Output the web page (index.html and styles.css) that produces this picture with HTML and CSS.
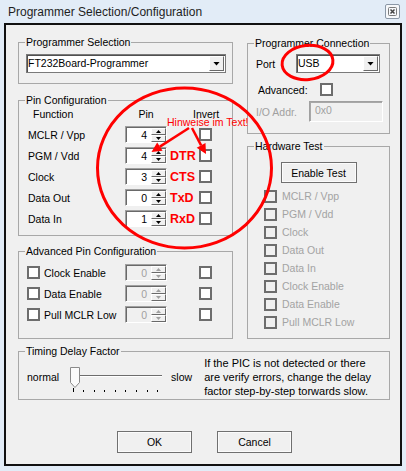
FILE: index.html
```html
<!DOCTYPE html>
<html lang="de">
<head>
    <meta charset="UTF-8">
    <meta name="viewport" content="width=device-width, initial-scale=1.0">
    <title>Programmer Selection/Configuration</title>
    <link rel="stylesheet" href="styles.css">
</head>
<body>
    <div class="window">
        <div class="titlebar">
            <span class="title">Programmer Selection/Configuration</span>
            <span class="close">
                <svg width="9" height="9" viewBox="0 0 9 9"><rect x="0.5" y="0.5" width="8" height="8" rx="1" fill="none" stroke="#7a7a7a"/><path d="M2.5 2.5 L6.5 6.5 M6.5 2.5 L2.5 6.5" stroke="#444" stroke-width="1.5"/></svg>
            </span>
        </div>
        <div class="client">
            <div class="columns">
                <div class="col left">
                    <fieldset class="group sel">
                        <legend>Programmer Selection</legend>
                        <div class="combo wide"><span class="combo-text">FT232Board-Programmer</span><span class="combo-btn"></span></div>
                    </fieldset>

                    <fieldset class="group pins">
                        <legend>Pin Configuration</legend>
                        <div class="pin-head"><span class="h-func">Function</span><span class="h-pin">Pin</span><span class="h-inv">Invert</span></div>
                        <div class="pin-grid">
                            <span>MCLR / Vpp</span>
                            <div class="spin"><span class="val">4</span><span class="arrows"><i class="up"></i><i class="dn"></i></span></div>
                            <b class="line"></b>
                            <span class="chk"></span>

                            <span>PGM / Vdd</span>
                            <div class="spin"><span class="val">4</span><span class="arrows"><i class="up"></i><i class="dn"></i></span></div>
                            <b class="line">DTR</b>
                            <span class="chk"></span>

                            <span>Clock</span>
                            <div class="spin"><span class="val">3</span><span class="arrows"><i class="up"></i><i class="dn"></i></span></div>
                            <b class="line">CTS</b>
                            <span class="chk"></span>

                            <span>Data Out</span>
                            <div class="spin"><span class="val">0</span><span class="arrows"><i class="up"></i><i class="dn"></i></span></div>
                            <b class="line">TxD</b>
                            <span class="chk"></span>

                            <span>Data In</span>
                            <div class="spin"><span class="val">1</span><span class="arrows"><i class="up"></i><i class="dn"></i></span></div>
                            <b class="line">RxD</b>
                            <span class="chk"></span>
                        </div>
                    </fieldset>

                    <fieldset class="group adv">
                        <legend>Advanced Pin Configuration</legend>
                        <div class="adv-grid">
                            <label class="opt"><span class="chk"></span><span>Clock Enable</span></label>
                            <div class="spin off"><span class="val">0</span><span class="arrows"><i class="up"></i><i class="dn"></i></span></div>
                            <span></span>
                            <span class="chk"></span>

                            <label class="opt"><span class="chk"></span><span>Data Enable</span></label>
                            <div class="spin off"><span class="val">0</span><span class="arrows"><i class="up"></i><i class="dn"></i></span></div>
                            <span></span>
                            <span class="chk"></span>

                            <label class="opt"><span class="chk"></span><span>Pull MCLR Low</span></label>
                            <div class="spin off"><span class="val">0</span><span class="arrows"><i class="up"></i><i class="dn"></i></span></div>
                            <span></span>
                            <span class="chk"></span>
                        </div>
                    </fieldset>
                </div>

                <div class="col right">
                    <fieldset class="group conn">
                        <legend>Programmer Connection</legend>
                        <div class="row port">
                            <span class="lbl">Port</span>
                            <div class="combo short"><span class="combo-text">USB</span><span class="combo-btn"></span></div>
                        </div>
                        <div class="row advanced">
                            <span class="lbl">Advanced:</span>
                            <span class="chk"></span>
                        </div>
                        <div class="row io">
                            <span class="lbl grey">I/O Addr.</span>
                            <span class="addr">0x0</span>
                        </div>
                    </fieldset>

                    <fieldset class="group hw">
                        <legend>Hardware Test</legend>
                        <div class="hw-btn"><button class="btn test">Enable Test</button></div>
                        <div class="hw-list">
                            <label class="hw-item"><span class="chk off"></span><span>MCLR / Vpp</span></label>
                            <label class="hw-item"><span class="chk off"></span><span>PGM / Vdd</span></label>
                            <label class="hw-item"><span class="chk off"></span><span>Clock</span></label>
                            <label class="hw-item"><span class="chk off"></span><span>Data Out</span></label>
                            <label class="hw-item"><span class="chk off"></span><span>Data In</span></label>
                            <label class="hw-item"><span class="chk off"></span><span>Clock Enable</span></label>
                            <label class="hw-item"><span class="chk off"></span><span>Data Enable</span></label>
                            <label class="hw-item"><span class="chk off"></span><span>Pull MCLR Low</span></label>
                        </div>
                    </fieldset>
                </div>
            </div>

            <fieldset class="group timing">
                <legend>Timing Delay Factor</legend>
                <div class="timing-row">
                    <span class="t-normal">normal</span>
                    <svg class="slider" width="100" height="30" viewBox="0 0 100 30">
                        <rect x="6" y="13" width="90" height="1" fill="#6d6d6d"/>
                        <rect x="6" y="14" width="90" height="1" fill="#ffffff"/>
                        <rect x="7" y="26" width="1" height="4" fill="#000"/>
                        <rect x="17" y="28" width="1" height="2" fill="#000"/>
                        <rect x="28" y="28" width="1" height="2" fill="#000"/>
                        <rect x="38" y="28" width="1" height="2" fill="#000"/>
                        <rect x="49" y="28" width="1" height="2" fill="#000"/>
                        <rect x="59" y="28" width="1" height="2" fill="#000"/>
                        <rect x="70" y="28" width="1" height="2" fill="#000"/>
                        <rect x="81" y="28" width="1" height="2" fill="#000"/>
                        <rect x="91" y="28" width="1" height="2" fill="#000"/>
                        <path d="M4.5 5.5 H13.5 V20.5 L9 25.5 L4.5 20.5 Z" fill="#fbfbfb" stroke="#8a8a8a"/>
                    </svg>
                    <span class="t-slow">slow</span>
                    <p class="t-help">If the PIC is not detected or there<br>are verify errors, change the delay<br>factor step-by-step torwards slow.</p>
                </div>
            </fieldset>

            <div class="buttons">
                <button class="btn">OK</button>
                <button class="btn">Cancel</button>
            </div>
        </div>

        <!-- red hand-drawn notes on top of the dialog -->
        <svg class="marks" width="406" height="471" viewBox="0 0 406 471">
            <ellipse cx="184.5" cy="168" rx="87" ry="80" fill="none" stroke="#f00" stroke-width="3"/>
            <ellipse cx="307.5" cy="62.5" rx="25.5" ry="17" transform="rotate(-6 307.5 62.5)" fill="none" stroke="#f00" stroke-width="3"/>
            <line x1="189" y1="128" x2="159.9" y2="146.6" stroke="#f00" stroke-width="2.5"/>
            <polygon points="151.5,152 162.6,150.8 157.2,142.4" fill="#f00"/>
            <line x1="192" y1="128" x2="201.1" y2="145.3" stroke="#f00" stroke-width="2.5"/>
            <polygon points="206,154 205.5,142.9 196.7,147.7" fill="#f00"/>
        </svg>
        <span class="hint">Hinweise im Text!</span>
    </div>
</body>
</html>
```

FILE: styles.css
```css
* {
    box-sizing: border-box;
}
body {
    margin: 0;
    font-family: "Liberation Sans", Arial, sans-serif;
    font-size: 10.5px;
    color: #000;
}
.window {
    position: relative;
    width: 406px;
    height: 471px;
    background: #e2ecf7;
    padding: 0 4px 5px;
    display: flex;
    flex-direction: column;
}
.titlebar {
    height: 23px;
    flex: none;
    display: flex;
    align-items: center;
    justify-content: space-between;
    padding: 0 2px 0 4px;
}
.title {
    font-size: 12px;
    color: #1e1e1e;
}
.close {
    width: 15px;
    height: 15px;
    border: 1px solid #8a97a6;
    border-radius: 2px;
    background: #f6f8fb;
    display: flex;
    align-items: center;
    justify-content: center;
}
.client {
    flex: 1;
    border: 2px solid #111;
    background: #f0f0f0;
    padding: 10px 10px 0 12px;
}
.columns {
    display: flex;
    gap: 14px;
}
.left {
    width: 215px;
}
.right {
    width: 143px;
    padding-top: 1px;
}

/* group boxes */
.group {
    margin: 0;
    padding: 0 6px;
    border: 1px solid #a8a8a8;
    min-width: 0;
}
.group legend {
    padding: 0 1px;
    line-height: 14px;
}
.sel { height: 49px; }
.pins { height: 143px; margin-top: 9px; }
.adv { height: 95px; margin-top: 8px; }
.conn { height: 98px; }
.hw { height: 200px; margin-top: 5px; }
.timing { height: 56px; margin-top: 5px; }

/* combo box */
.combo {
    display: flex;
    height: 19px;
    border: 1px solid #7a7a7a;
    background: #fff;
    padding: 1px;
    box-shadow: inset 1px 1px 0 #505050;
}
.combo.wide {
    width: 200px;
    margin: 5px 0 0 1px;
}
.combo.short {
    width: 84px;
}
.combo-text {
    flex: 1;
    line-height: 15px;
}
.combo-btn {
    width: 15px;
    background: #f0f0f0;
    border: 1px solid;
    border-color: #fff #696969 #696969 #fff;
    display: flex;
    align-items: center;
    justify-content: center;
}
.combo-btn::after {
    content: "";
    width: 7px;
    height: 4px;
    background: #000;
    clip-path: polygon(0 0, 100% 0, 50% 100%);
}

/* spin box */
.spin {
    display: flex;
    height: 17px;
    background: #fff;
    border: 1px solid;
    border-color: #a0a0a0 #fff #fff #a0a0a0;
    box-shadow: inset 1px 1px 0 #696969;
    padding: 1px 0 0 1px;
}
.spin .val {
    flex: 1;
    text-align: right;
    padding-right: 4px;
    line-height: 14px;
}
.arrows {
    width: 15px;
    display: flex;
    flex-direction: column;
}
.arrows i {
    flex: 1;
    background: #f0f0f0;
    border: 1px solid;
    border-color: #fff #696969 #696969 #fff;
    display: flex;
    align-items: center;
    justify-content: center;
}
.arrows i::after {
    content: "";
    width: 5px;
    height: 3px;
    background: #000;
    clip-path: polygon(50% 0, 100% 100%, 0 100%);
}
.arrows i.dn::after {
    clip-path: polygon(0 0, 100% 0, 50% 100%);
}
.spin.off {
    background: #f0f0f0;
}
.spin.off .val {
    color: #a0a0a0;
}
.spin.off i::after {
    background: #a0a0a0;
}

/* check box */
.chk {
    display: block;
    width: 13px;
    height: 13px;
    flex: none;
    border: 2px solid #6d6d6d;
    background: #fff;
}
.chk.off {
    background: #f0f0f0;
}

/* pin configuration */
.pin-head {
    display: flex;
    height: 19px;
    line-height: 12px;
    padding: 1px 0 0 3px;
}
.h-func {
    width: 97px;
    padding-left: 5px;
}
.h-pin {
    width: 42px;
    text-align: center;
}
.h-inv {
    margin-left: 26px;
}
.pin-grid,
.adv-grid {
    display: grid;
    grid-template-columns: 97px 42px 32px 13px;
    row-gap: 4px;
    align-items: center;
    padding-left: 3px;
}
.line {
    color: #f00;
    font-size: 12.5px;
    line-height: 14px;
    padding-left: 3px;
}
.adv-grid {
    grid-template-columns: 98px 42px 32px 13px;
    padding-left: 2px;
    margin-top: 6px;
}
.opt {
    display: flex;
    align-items: center;
    gap: 4px;
}

/* programmer connection */
.row {
    display: flex;
    align-items: center;
    padding-left: 2px;
}
.row.port {
    margin-top: 4px;
}
.row.port .lbl {
    width: 40px;
}
.row.advanced {
    height: 13px;
    margin-top: 10px;
    padding-left: 4px;
}
.row.advanced .lbl {
    width: 62px;
}
.row.io {
    margin-top: 5px;
}
.row.io .lbl {
    width: 53px;
}
.grey {
    color: #a0a0a0;
}
.addr {
    width: 74px;
    height: 21px;
    line-height: 17px;
    padding-left: 5px;
    color: #a0a0a0;
    border: 1px solid;
    border-color: #a0a0a0 #fff #fff #a0a0a0;
    box-shadow: inset 1px 1px 0 #a8a8a8;
}

/* hardware test */
.hw-btn {
    display: flex;
    justify-content: center;
    margin-top: 9px;
}
.btn {
    width: 75px;
    height: 22px;
    margin: 0;
    padding: 0;
    font: inherit;
    color: #000;
    background: #f0f0f0;
    border: 1px solid #707070;
    box-shadow: inset 0 0 0 1px #fbfbfb;
}
.btn.test {
    width: 76px;
    height: 21px;
}
.hw-list {
    margin-top: 4px;
    padding-left: 10px;
}
.hw-item {
    display: flex;
    align-items: center;
    height: 18px;
    gap: 5px;
    color: #a3a3a3;
}

/* timing */
.timing-row {
    display: flex;
    align-items: center;
    margin-top: -2px;
    padding-left: 2px;
}
.slider {
    display: block;
    margin-left: 7px;
}
.t-slow {
    margin-left: 5px;
}
.t-help {
    margin: 0 0 0 12px;
    font-size: 11px;
    line-height: 14px;
}

.buttons {
    display: flex;
    justify-content: center;
    gap: 25px;
    margin-top: 31px;
    padding-left: 1px;
}

/* notes drawn over the dialog */
.marks {
    position: absolute;
    left: 0;
    top: 0;
    pointer-events: none;
}
.hint {
    position: absolute;
    left: 167px;
    top: 116px;
    line-height: 12px;
    color: #f00;
}
```
